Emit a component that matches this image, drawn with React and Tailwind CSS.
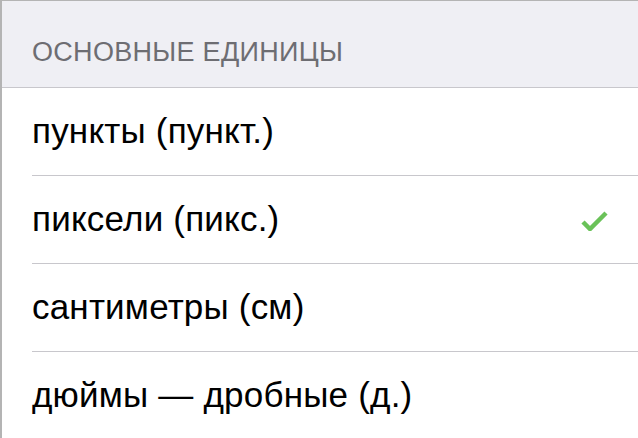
export default function App() {
  const rows = [
    { label: "пункты (пункт.)", checked: false },
    { label: "пиксели (пикс.)", checked: true },
    { label: "сантиметры (см)", checked: false },
    { label: "дюймы — дробные (д.)", checked: false },
  ];

  return (
    <div
      className="w-[638px] h-[438px] overflow-hidden bg-white border-t border-l-2 border-[#b4b4b4]"
      style={{ fontFamily: '"Liberation Sans", Arial, sans-serif' }}
    >
      {/* Section header */}
      <div className="h-[87px] bg-[#efeff4] border-b border-[#c8c7cc] flex items-end pb-[21px] pl-[30px]">
        <span className="text-[27px] leading-none tracking-[0.3px] text-[#6d6d72] uppercase">
          Основные единицы
        </span>
      </div>

      {/* Rows */}
      {rows.map((row, index) => (
        <div key={index} className="pl-[30px]">
          <div className="h-[88px] flex items-center justify-between pr-[30px] border-b border-[#c8c7cc]">
            <span className="text-[35px] tracking-[0.2px] text-black">{row.label}</span>
            {row.checked && (
              <svg width="32" height="22" viewBox="0 0 32 22">
                <path
                  d="M7 13 L14 20 L30 4"
                  fill="none"
                  stroke="#6ac259"
                  strokeWidth="4.5"
                />
              </svg>
            )}
          </div>
        </div>
      ))}
    </div>
  );
}
